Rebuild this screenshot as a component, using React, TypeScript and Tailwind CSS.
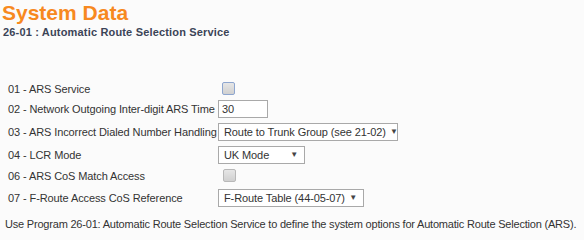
import React from 'react';

const font = { fontFamily: '"Liberation Sans", Arial, sans-serif' };

const Select: React.FC<{ value: string; width: string }> = ({ value, width }) => (
  <div
    className={`flex items-center justify-between h-[18px] border border-[#a9a9a9] bg-white pl-[5px] pr-[6px] text-[11px] leading-[16px] tracking-[-0.1px] text-[#333] ${width}`}
  >
    <span className="whitespace-nowrap">{value}</span>
    <span className="text-[8px] text-[#444] ml-1">▼</span>
  </div>
);

const Checkbox: React.FC<{ focused?: boolean }> = ({ focused }) => (
  <div
    className={`w-[13px] h-[13px] rounded-[2px] border bg-gradient-to-b from-[#e6e6e6] to-[#d0d0d0] ${
      focused ? 'border-[#8ea6cf] ml-[4px]' : 'border-[#b8b8b8] ml-[5px]'
    }`}
  />
);

const rows: { label: string; control: React.ReactNode; h: string }[] = [
  { label: '01 - ARS Service', control: <Checkbox focused />, h: 'h-[19px]' },
  {
    label: '02 - Network Outgoing Inter-digit ARS Time',
    control: (
      <div className="w-[50px] h-[18px] border border-[#a9a9a9] bg-white pl-[3px] text-[11px] leading-[16px] text-[#333]">
        30
      </div>
    ),
    h: 'h-[21px]',
  },
  {
    label: '03 - ARS Incorrect Dialed Number Handling',
    control: <Select value="Route to Trunk Group (see 21-02)" width="w-[180px]" />,
    h: 'h-[25px]',
  },
  { label: '04 - LCR Mode', control: <Select value="UK Mode" width="w-[87px]" />, h: 'h-[21px]' },
  { label: '06 - ARS CoS Match Access', control: <Checkbox />, h: 'h-[21px]' },
  {
    label: '07 - F-Route Access CoS Reference',
    control: <Select value="F-Route Table (44-05-07)" width="w-[146px]" />,
    h: 'h-[23px]',
  },
];

export default function App() {
  return (
    <div className="w-[584px] h-[240px] bg-[#fbfbfb] overflow-hidden" style={font}>
      <div className="pl-[2px] pt-[1px] text-[21px] leading-[23px] font-bold text-[#f7891f]">System Data</div>
      <div className="pl-[3px] mt-[1px] text-[11px] leading-[14px] font-bold tracking-[0.17px] text-[#3b4457]">
        26-01 : Automatic Route Selection Service
      </div>
      <div className="mt-[40px] pl-[8px]">
        {rows.map((r) => (
          <div key={r.label} className={`grid grid-cols-[210px_auto] items-center ${r.h}`}>
            <span className="text-[11px] leading-[16px] tracking-[-0.1px] text-[#333] whitespace-nowrap">
              {r.label}
            </span>
            <div className="flex">{r.control}</div>
          </div>
        ))}
      </div>
      <div className="pl-[5px] mt-[7px] text-[11px] leading-[16px] tracking-[-0.2px] text-[#333] whitespace-nowrap">
        Use Program 26-01: Automatic Route Selection Service to define the system options for Automatic Route Selection (ARS).
      </div>
    </div>
  );
}
